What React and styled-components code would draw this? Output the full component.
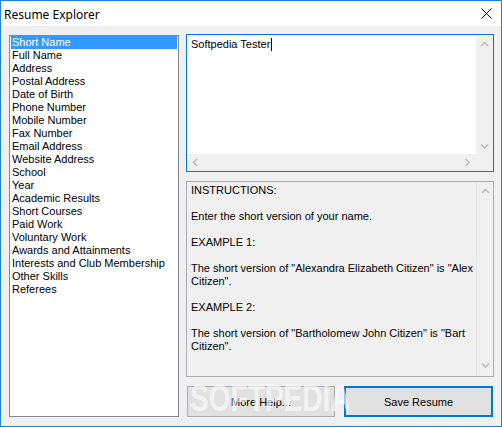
import React from "react";
import styled, { createGlobalStyle } from "styled-components";

const GlobalStyle = createGlobalStyle`
    html, body {
        margin: 0;
        padding: 0;
        background: #ffffff;
    }
    * {
        box-sizing: border-box;
    }
`;

const Window = styled.div`
    width: 502px;
    height: 427px;
    border: 1px solid #1883d7;
    background: #f0f0f0;
    display: flex;
    flex-direction: column;
    font-family: "Liberation Sans", Arial, sans-serif;
    font-size: 11px;
    color: #000;
    position: relative;
    overflow: hidden;
`;

const TitleBar = styled.div`
    height: 25px;
    background: #ffffff;
    display: flex;
    align-items: center;
    justify-content: space-between;
    padding: 0 9px 0 3px;
    flex-shrink: 0;
`;

const Title = styled.span`
    font-family: "Noto Sans", "Liberation Sans", sans-serif;
    font-size: 12px;
    margin-top: 1px;
`;

const Client = styled.div`
    flex: 1;
    display: flex;
    gap: 7px;
    padding: 8px 7px 9px 8px;
`;

const ListBox = styled.div`
    width: 170px;
    margin-top: 1px;
    border: 1px solid #828790;
    background: #ffffff;
    padding: 0 1px;
    display: flex;
    flex-direction: column;
`;

const ListItem = styled.div`
    height: 13px;
    line-height: 13px;
    padding-left: 1px;
    white-space: nowrap;
    background: ${(p) => (p.$selected ? "#3399ff" : "transparent")};
    color: ${(p) => (p.$selected ? "#ffffff" : "#000000")};
`;

const RightColumn = styled.div`
    width: 308px;
    display: flex;
    flex-direction: column;
    gap: 9px;
`;

const EditBox = styled.div`
    height: ${(p) => p.$height}px;
    border: 1px solid ${(p) => (p.$focused ? "#0078d7" : "#adadad")};
    display: grid;
    grid-template-columns: 1fr 17px;
    grid-template-rows: ${(p) => (p.$hscroll ? "1fr 17px" : "1fr")};
    flex-shrink: 0;
`;

const EditArea = styled.div`
    background: ${(p) => (p.$readonly ? "#f0f0f0" : "#ffffff")};
    padding: ${(p) => (p.$readonly ? "2px 4px" : "3px 4px")};
    line-height: 13px;
    white-space: nowrap;
    overflow: hidden;
`;

const Caret = styled.span`
    display: inline-block;
    width: 1px;
    height: 13px;
    background: #000;
    vertical-align: top;
    margin-left: 1px;
`;

const VScroll = styled.div`
    background: #f0f0f0;
    display: flex;
    flex-direction: column;
    justify-content: space-between;
    align-items: center;
    padding: ${(p) => p.$pad || "6px 0"};
    border-left: ${(p) => (p.$edge ? "1px solid #e6e6e6" : "none")};
`;

const HScroll = styled.div`
    background: #f0f0f0;
    display: flex;
    justify-content: space-between;
    align-items: center;
    padding: 0 5px;
`;

const Corner = styled.div`
    background: #f0f0f0;
`;

const Line = styled.div`
    height: 13px;
    line-height: 13px;
`;

const ButtonRow = styled.div`
    display: flex;
    gap: 9px;
    padding: 0 1px;
    height: 31px;
    flex-shrink: 0;
`;

const Button = styled.div`
    width: ${(p) => p.$width}px;
    height: 31px;
    background: #e1e1e1;
    border: ${(p) => (p.$default ? "2px solid #0078d7" : "1px solid #adadad")};
    display: flex;
    align-items: center;
    justify-content: center;
    font-size: 11px;
`;

const Watermark = styled.div`
    position: absolute;
    left: 189px;
    top: 378px;
    font-family: "Liberation Sans", Arial, sans-serif;
    font-weight: bold;
    font-size: 36px;
    line-height: 40px;
    color: rgba(255, 255, 255, 0.6);
    transform: scaleX(0.78);
    transform-origin: left top;
    pointer-events: none;
    white-space: nowrap;
`;

const Chevron = ({ dir }) => {
    const paths = {
        up: "M1 5 L4.5 1.5 L8 5",
        down: "M1 1.5 L4.5 5 L8 1.5",
        left: "M5 1 L1.5 4.5 L5 8",
        right: "M1.5 1 L5 4.5 L1.5 8",
    };
    const vertical = dir === "up" || dir === "down";
    return (
        <svg
            width={vertical ? 9 : 7}
            height={vertical ? 7 : 9}
            viewBox={vertical ? "0 0 9 7" : "0 0 7 9"}
        >
            <path d={paths[dir]} fill="none" stroke="#bfbfbf" strokeWidth="1.6" />
        </svg>
    );
};

const CloseIcon = () => (
    <svg width="11" height="11" viewBox="0 0 11 11">
        <path d="M0.5 0.5 L10.5 10.5 M10.5 0.5 L0.5 10.5" stroke="#000" strokeWidth="1" />
    </svg>
);

const fields = [
    "Short Name",
    "Full Name",
    "Address",
    "Postal Address",
    "Date of Birth",
    "Phone Number",
    "Mobile Number",
    "Fax Number",
    "Email Address",
    "Website Address",
    "School",
    "Year",
    "Academic Results",
    "Short Courses",
    "Paid Work",
    "Voluntary Work",
    "Awards and Attainments",
    "Interests and Club Membership",
    "Other Skills",
    "Referees",
];

const instructions = [
    "INSTRUCTIONS:",
    "",
    "Enter the short version of your name.",
    "",
    "EXAMPLE 1:",
    "",
    'The short version of "Alexandra Elizabeth Citizen" is "Alex',
    'Citizen".',
    "",
    "EXAMPLE 2:",
    "",
    'The short version of "Bartholomew John Citizen" is "Bart',
    'Citizen".',
];

const App = () => {
    return (
        <>
            <GlobalStyle />
            <Window>
                <TitleBar>
                    <Title>Resume Explorer</Title>
                    <CloseIcon />
                </TitleBar>
                <Client>
                    <ListBox>
                        {fields.map((f, i) => (
                            <ListItem key={f} $selected={i === 0}>
                                {f}
                            </ListItem>
                        ))}
                    </ListBox>
                    <RightColumn>
                        <EditBox $height={138} $focused $hscroll>
                            <EditArea>
                                Softpedia Tester
                                <Caret />
                            </EditArea>
                            <VScroll $pad="6px 0 4px">
                                <Chevron dir="up" />
                                <Chevron dir="down" />
                            </VScroll>
                            <HScroll>
                                <Chevron dir="left" />
                                <Chevron dir="right" />
                            </HScroll>
                            <Corner />
                        </EditBox>
                        <EditBox $height={196}>
                            <EditArea $readonly>
                                {instructions.map((t, i) => (
                                    <Line key={i}>{t}</Line>
                                ))}
                            </EditArea>
                            <VScroll $pad="6px 0 7px" $edge>
                                <Chevron dir="up" />
                                <Chevron dir="down" />
                            </VScroll>
                        </EditBox>
                        <ButtonRow>
                            <Button $width={148}>More Help...</Button>
                            <Button $width={149} $default>
                                Save Resume
                            </Button>
                        </ButtonRow>
                    </RightColumn>
                </Client>
                <Watermark>SOFTPEDIA</Watermark>
            </Window>
        </>
    );
};

export default App;
